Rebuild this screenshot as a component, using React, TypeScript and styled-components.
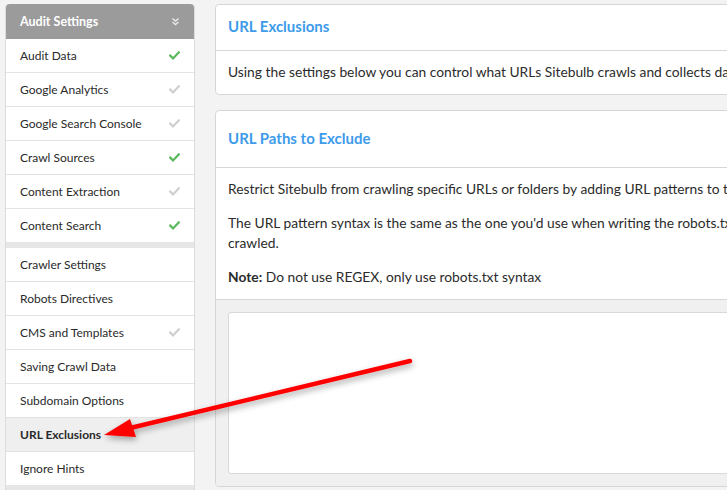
import React from "react";
import styled, { createGlobalStyle } from "styled-components";

const GlobalStyle = createGlobalStyle`
  html, body {
    margin: 0;
    padding: 0;
    background: #f3f3f3;
    font-family: Lato, "Open Sans", Arial, sans-serif;
    color: #2b2b2b;
    overflow: hidden;
  }
`;

const Page = styled.div`
  position: relative;
  width: 727px;
  height: 490px;
  overflow: hidden;
  display: flex;
  align-items: flex-start;
  gap: 20px;
  padding: 4px 0 0 5px;
  box-sizing: border-box;
`;

const Sidebar = styled.nav`
  width: 190px;
  flex-shrink: 0;
  height: 500px;
  background: #e6e6e6;
  border-left: 1px solid #dcdcdc;
  border-right: 1px solid #dcdcdc;
  border-radius: 4px 4px 0 0;
  display: flex;
  flex-direction: column;
  box-sizing: border-box;
`;

const SideHeader = styled.div`
  height: 35px;
  background: #9b9b9b;
  border-radius: 4px 4px 0 0;
  display: flex;
  align-items: center;
  justify-content: space-between;
  padding: 0 14px 0 14px;
  color: #fff;
  font-weight: 700;
  font-size: 12.5px;
`;

const Group = styled.div<{ $gap?: boolean }>`
  display: flex;
  flex-direction: column;
  margin-top: ${(p) => (p.$gap ? "6px" : "0")};
`;

const Row = styled.div<{ $active?: boolean }>`
  height: 33px;
  border-bottom: 1px solid #e3e3e3;
  background: ${(p) => (p.$active ? "#efefef" : "#fff")};
  display: flex;
  align-items: center;
  justify-content: space-between;
  padding: 0 14px;
  font-size: 12px;
  font-weight: ${(p) => (p.$active ? 700 : 400)};
  color: #2a2a2a;
  &:last-child {
    border-bottom: none;
  }
`;

const Main = styled.main`
  flex: 1;
  display: flex;
  flex-direction: column;
  gap: 15px;
  min-width: 0;
`;

const Card = styled.section`
  width: 560px;
  background: #fff;
  border: 1px solid #d6d6d6;
  border-radius: 4px;
  box-sizing: border-box;
`;

const CardHead = styled.div<{ $tall?: boolean }>`
  height: ${(p) => (p.$tall ? "57px" : "46px")};
  box-sizing: border-box;
  padding: 0 12px ${(p) => (p.$tall ? "2px" : "3px")};
  display: flex;
  align-items: center;
  border-bottom: 1px solid #d6d6d6;
  color: #3d9be9;
  font-weight: 700;
  font-size: 15px;
  white-space: nowrap;
`;

const CardBody = styled.div`
  padding: 11px 12px 12px;
  font-size: 13.8px;
  line-height: 20px;
  white-space: nowrap;
`;

const Para = styled.p`
  margin: 0 0 14px;
  &:last-child {
    margin-bottom: 0;
  }
`;

const Well = styled.div`
  background: #f0f0f0;
  border-top: 1px solid #d6d6d6;
  padding: 12px;
  border-radius: 0 0 4px 4px;
`;

const InputBox = styled.div`
  height: 162px;
  box-sizing: border-box;
  background: #fff;
  border: 1px solid #d9d9d9;
  border-radius: 3px;
`;

const Overlay = styled.svg`
  position: absolute;
  left: 0;
  top: 0;
  pointer-events: none;
`;

const Check = ({ on }: { on: boolean }) => (
  <svg width="11" height="9" viewBox="0 0 11 9">
    <path
      d="M1.2 4.6 L4 7.4 L9.8 1.4"
      fill="none"
      stroke={on ? "#5cb85c" : "#cfcfcf"}
      strokeWidth="2.2"
      strokeLinecap="square"
    />
  </svg>
);

const Chevrons = () => (
  <svg width="9" height="9" viewBox="0 0 9 9">
    <path
      d="M1.5 1.5 L4.5 4 L7.5 1.5 M1.5 5 L4.5 7.5 L7.5 5"
      fill="none"
      stroke="#e8e8e8"
      strokeWidth="1.5"
    />
  </svg>
);

const auditItems: [string, boolean][] = [
  ["Audit Data", true],
  ["Google Analytics", false],
  ["Google Search Console", false],
  ["Crawl Sources", true],
  ["Content Extraction", false],
  ["Content Search", true],
];

const crawlerItems: [string, boolean | null][] = [
  ["Crawler Settings", null],
  ["Robots Directives", null],
  ["CMS and Templates", false],
  ["Saving Crawl Data", null],
  ["Subdomain Options", null],
  ["URL Exclusions", null],
  ["Ignore Hints", null],
];

export default function App() {
  return (
    <>
      <GlobalStyle />
      <Page>
        <Sidebar>
          <SideHeader>
            <span>Audit Settings</span>
            <Chevrons />
          </SideHeader>
          <Group>
            {auditItems.map(([label, on]) => (
              <Row key={label}>
                <span>{label}</span>
                <Check on={on} />
              </Row>
            ))}
          </Group>
          <Group $gap>
            {crawlerItems.map(([label, on]) => (
              <Row key={label} $active={label === "URL Exclusions"}>
                <span>{label}</span>
                {on !== null && <Check on={on} />}
              </Row>
            ))}
          </Group>
        </Sidebar>
        <Main>
          <Card>
            <CardHead>URL Exclusions</CardHead>
            <CardBody>
              <Para>
                Using the settings below you can control what URLs Sitebulb crawls and collects data from.
              </Para>
            </CardBody>
          </Card>
          <Card>
            <CardHead $tall>URL Paths to Exclude</CardHead>
            <CardBody>
              <Para>
                Restrict Sitebulb from crawling specific URLs or folders by adding URL patterns to the box below.
              </Para>
              <Para>
                The URL pattern syntax is the same as the one you'd use when writing the robots.txt file
                <br />
                crawled.
              </Para>
              <Para>
                <b>Note:</b> Do not use REGEX, only use robots.txt syntax
              </Para>
            </CardBody>
            <Well>
              <InputBox />
            </Well>
          </Card>
        </Main>
        <Overlay width="727" height="490" viewBox="0 0 727 490">
          <defs>
            <filter id="sh" x="-20%" y="-50%" width="140%" height="200%">
              <feDropShadow dx="1" dy="3" stdDeviation="3" floodColor="#000" floodOpacity="0.35" />
            </filter>
          </defs>
          <g filter="url(#sh)">
            <line x1="410" y1="361" x2="126" y2="429" stroke="#ff0000" strokeWidth="4.5" strokeLinecap="round" />
            <polygon points="104,435 130,419 136,437" fill="#ff0000" />
          </g>
        </Overlay>
      </Page>
    </>
  );
}
